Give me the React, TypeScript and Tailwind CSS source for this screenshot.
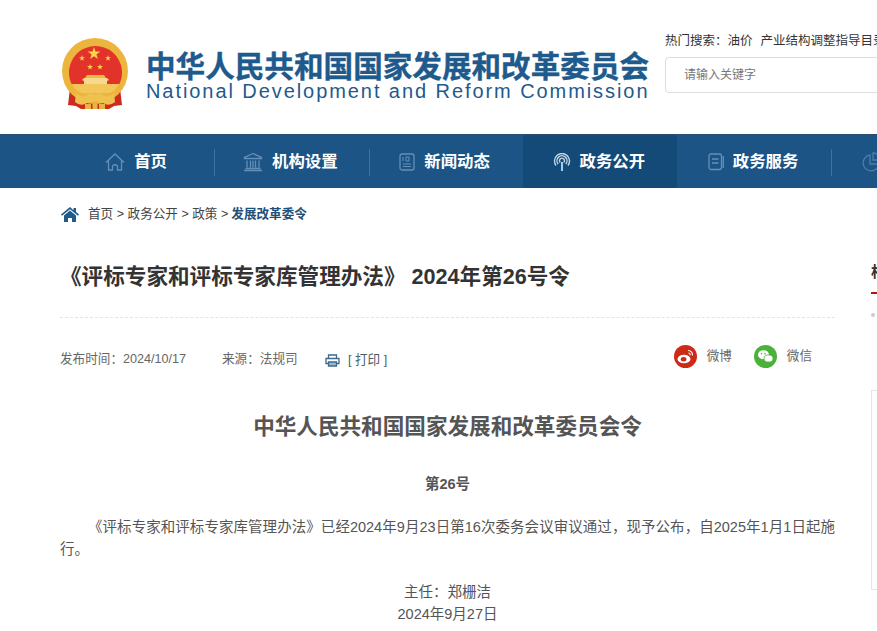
import React from 'react';

const CJK = '"Liberation Sans","Noto Sans CJK SC",sans-serif';

// top nav entries, the icon is drawn per item
const NAV = [
  { label: '首页', icon: 'home' },
  { label: '机构设置', icon: 'bank' },
  { label: '新闻动态', icon: 'news' },
  { label: '政务公开', icon: 'signal', active: true, noLine: true },
  { label: '政务服务', icon: 'book' },
];

function NavIcon({ name }: { name: string }) {
  const c = { fill: 'none', stroke: '#6390b8', strokeWidth: 1.3 };
  if (name === 'home') {
    return (
      <svg width="20" height="20" viewBox="0 0 20 20" {...c}>
        <path d="M1 10.500 10 2l9 8.500M3.500 8.500V18h4v-4q2.500-2.500 5 0v4h4V8.500" />
      </svg>
    );
  }
  if (name === 'bank') {
    return (
      <svg width="20" height="20" viewBox="0 0 20 20" {...c}>
        <path d="M10 1.500 1.500 5.500v1h17v-1zM4 8.500v7M7.500 8.500v7M10 8.500v7M12.500 8.500v7M16 8.500v7M2.500 16.500h15M1 18.500h18" />
      </svg>
    );
  }
  if (name === 'news') {
    return (
      <svg width="16" height="18" viewBox="0 0 16 18" {...c}>
        <rect x="1" y="1" width="14" height="16" rx="2" />
        <path d="M4 4v4M7 4h3v4H7zM4 11h8M4 13.500h8" strokeWidth="1" />
      </svg>
    );
  }
  if (name === 'signal') {
    return (
      <svg width="18" height="18" viewBox="0 0 18 18" fill="none" stroke="#c3d4e3" strokeWidth="1.400">
        <path d="M3 12.500a7.500 7.500 0 1 1 12 0M5.200 11a5 5 0 1 1 7.600 0M7.300 9.500a2.500 2.500 0 1 1 3.400 0" />
        <path d="M9 9v9" stroke="#9fd0f0" strokeWidth="2" />
      </svg>
    );
  }
  if (name === 'book') {
    return (
      <svg width="16" height="18" viewBox="0 0 16 18" {...c}>
        <rect x="1" y="1" width="12.500" height="15.500" rx="2" />
        <path d="M4 6h6.500M4 10h6.500M15.300 3v12" />
      </svg>
    );
  }
  return (
    <svg width="20" height="20" viewBox="0 0 20 20" {...c}>
      <path d="M8 3a8 8 0 1 0 9 9H8zM11 1v7h7a7 7 0 0 0-7-7z" />
    </svg>
  );
}

const bigStar = 'm34 9 1.500 4.500h4.800l-3.900 2.900 1.500 4.600-3.900-2.800-3.900 2.800 1.500-4.600-3.900-2.900h4.800z';
const smallStars =
  'm22 17 .7 2.200H25l-1.900 1.400.7 2.200-1.800-1.300-1.800 1.300.7-2.200-1.900-1.400h2.300z' +
  'm26 0 .7 2.200H51l-1.900 1.400.7 2.200-1.800-1.300-1.800 1.300.7-2.200-1.900-1.400h2.300z' +
  'M30 26l.7 2.100H33l-1.800 1.300.7 2.100-1.900-1.300-1.800 1.300.7-2.100-1.900-1.300h2.300z' +
  'M40 26l.7 2.100H43l-1.800 1.300.7 2.100-1.900-1.300-1.800 1.300.7-2.100-1.900-1.300h2.300z';

function Emblem() {
  return (
    <svg width="70" height="72" viewBox="0 0 70 72">
      <path d="M10 50 8 67l8 1 5 3h28l5-3 8-1-2-17z" fill="#cf2a1e" />
      <circle cx="35" cy="33" r="33" fill="#ecb63e" />
      <path d="M11.600 46A26.500 26.500 0 1 1 59.400 46Z" fill="#e3322a" />
      <path d="M12 46h47q-3 6-9 9H21q-6-3-9-9z" fill="#f2c659" />
      <path d="M24 40h23l2 2-2 1v3H24v-3l-2-1z" fill="#f6d98c" />
      <path d="M27 37h17l2 3H25z" fill="#efb844" />
      <path d={bigStar} fill="#f8d44c" />
      <path d={smallStars} fill="#f8d44c" />
      <path d="M16 55q6 6 11 2 4-3 8 0 4-3 8 0 5 4 11-2l1 9q-6 5-12 1l-8-2-8 2q-6 4-12-1z" fill="#efc250" />
      <path d="M25 66h20v5H25z" fill="#e8b443" />
      <path d="M31 66h1.500v5H31zM37.500 66H39v5h-1.500z" fill="#cf2a1e" />
    </svg>
  );
}

function WeiboIcon() {
  return (
    <svg width="23" height="23" viewBox="0 0 23 23">
      <circle cx="11.500" cy="11.500" r="11.500" fill="#cd2a17" />
      <ellipse cx="10" cy="14" rx="6.500" ry="4.300" fill="#fff" />
      <ellipse cx="9.600" cy="14.300" rx="2.800" ry="2.200" fill="#cd2a17" />
      <path d="M14 5.500a4.500 4.500 0 0 1 4.500 5M14.500 8a2 2 0 0 1 1.800 2.200" fill="none" stroke="#fff" strokeWidth="1.100" />
    </svg>
  );
}

function WechatIcon() {
  return (
    <svg width="23" height="23" viewBox="0 0 23 23">
      <circle cx="11.500" cy="11.500" r="11.500" fill="#4cb13b" />
      <ellipse cx="9.500" cy="9.800" rx="5.500" ry="4.500" fill="#fff" />
      <ellipse cx="14.500" cy="13.500" rx="4.500" ry="3.600" fill="#fff" stroke="#4cb13b" strokeWidth=".8" />
      <circle cx="7.500" cy="8.800" r=".8" fill="#4cb13b" />
      <circle cx="11" cy="8.800" r=".8" fill="#4cb13b" />
    </svg>
  );
}

function PrintIcon() {
  return (
    <svg width="15" height="13" viewBox="0 0 15 13" fill="none" stroke="#3f6a8c" strokeWidth="1.300">
      <path d="M3.500 4V1h8v3M3 9.500H1V4.500h13v5h-2" />
      <path d="M3.500 8h8v4h-8z" fill="#9fb8cc" />
    </svg>
  );
}

function CrumbHome() {
  return (
    <svg width="18" height="15" viewBox="0 0 18 15" fill="#1f5a8c" className="mr-[9px] ml-px">
      <path d="M9 0 0 7.500l1 1.300L9 2.200l8 6.600 1-1.300-3-2.500V1h-2.500v2.300z" />
      <path d="M9 3.500 3 8.500V15h4v-4h4v4h4V8.500z" />
    </svg>
  );
}

export default function App() {
  return (
    <div className="w-[877px] h-[631px] overflow-hidden bg-white" style={{ fontFamily: CJK }}>
      {/* header */}
      <header className="h-[134px] flex pl-[60px] overflow-hidden">
        <div className="pt-[38px] w-[86px] shrink-0">
          <Emblem />
        </div>
        <div className="pt-[50px] w-[519px] shrink-0 text-[#1f5a8c]">
          <div className="text-[29.600px] leading-[34px] font-bold whitespace-nowrap [-webkit-text-stroke:0.4px_#1f5a8c]">中华人民共和国国家发展和改革委员会</div>
          <div className="text-[20px] leading-[14px] tracking-[1.930px] whitespace-nowrap">National Development and Reform Commission</div>
        </div>
        <div className="pt-[33px] w-[400px] shrink-0">
          <div className="text-[12.500px] leading-[16px] text-[#333] whitespace-nowrap">
            热门搜索：油价<span className="ml-[8px]">产业结构调整指导目录</span>
          </div>
          <div className="mt-[8px] h-[36px] border border-[#ddd] rounded pl-[18px] text-xs leading-[34px] text-[#777]">请输入关键字</div>
        </div>
      </header>

      {/* nav */}
      <nav className="h-[54px] bg-[#1c5486] border-t border-[#2b4f72] flex pl-[60px] overflow-hidden">
        {NAV.map((item) => (
          <div
            key={item.label}
            className={`relative w-[154.250px] shrink-0 flex items-center justify-center gap-[9px] pr-[2px] text-white font-bold text-[16.400px] ${item.active ? 'bg-[#144a78]' : ''}`}
          >
            <NavIcon name={item.icon} />
            <span className="whitespace-nowrap">{item.label}</span>
            {!item.noLine && <i className="absolute -right-px top-[14px] h-[27px] w-px bg-[#3f729f]" />}
          </div>
        ))}
        <div className="pl-[31px] shrink-0 flex items-center opacity-70">
          <NavIcon name="pie" />
        </div>
      </nav>

      <div className="flex pl-[60px] overflow-hidden">
        {/* article */}
        <main className="w-[775px] shrink-0">
          <div className="h-[53px] flex items-center text-[12.600px] text-[#444]">
            <CrumbHome />
            <span>首页 &gt; 政务公开 &gt; 政策 &gt;</span>
            <b className="ml-[3px] text-[#1f4f78]">发展改革委令</b>
          </div>
          <h1 className="mt-[18px] h-[59px] text-[21.600px] leading-[36px] font-bold text-[#333] border-b border-dashed border-[#e4e4e4]">
            《评标专家和评标专家库管理办法》 2024年第26号令
          </h1>
          <div className="h-[72px] pt-[10px] flex items-center text-[12.600px] text-[#666]">
            <span className="w-[162px]">发布时间：2024/10/17</span>
            <span className="w-[103px]">来源：法规司</span>
            <span className="mt-[3px]"><PrintIcon /></span>
            <span className="ml-[8px] mt-[2px] text-[#4a5d6c]">[ 打印 ]</span>
            <div className="ml-auto flex items-center pr-[23px] -mt-[6px]">
              <WeiboIcon />
              <span className="ml-[10px]">微博</span>
              <span className="ml-[22px]"><WechatIcon /></span>
              <span className="ml-[10px]">微信</span>
            </div>
          </div>
          <div className="text-[14.500px] leading-[22px] text-[#555]">
            <h2 className="text-center text-[21.600px] leading-[36px] mt-[19px] font-bold text-[#555]">中华人民共和国国家发展和改革委员会令</h2>
            <p className="text-center font-bold mt-[28px]">第26号</p>
            <p className="mt-[21px] indent-[28px] text-justify">《评标专家和评标专家库管理办法》已经2024年9月23日第16次委务会议审议通过，现予公布，自2025年1月1日起施行。</p>
            <p className="text-center mt-[21px]">主任：郑栅洁</p>
            <p className="text-center">2024年9月27日</p>
          </div>
        </main>
        {/* side column, cut off by the window */}
        <aside className="ml-[36px] w-[300px] shrink-0 pt-[72px]">
          <div className="text-[15px] leading-[24px] font-bold text-[#333]">相关</div>
          <div className="mt-[8px] h-[2px] w-[20px] bg-[#a51c1c]" />
          <div className="mt-[19px] h-[4px] w-[4px] rounded-full bg-[#ccc]" />
          <div className="mt-[73px] h-[200px] border border-[#e5e5e5]" />
        </aside>
      </div>
    </div>
  );
}
